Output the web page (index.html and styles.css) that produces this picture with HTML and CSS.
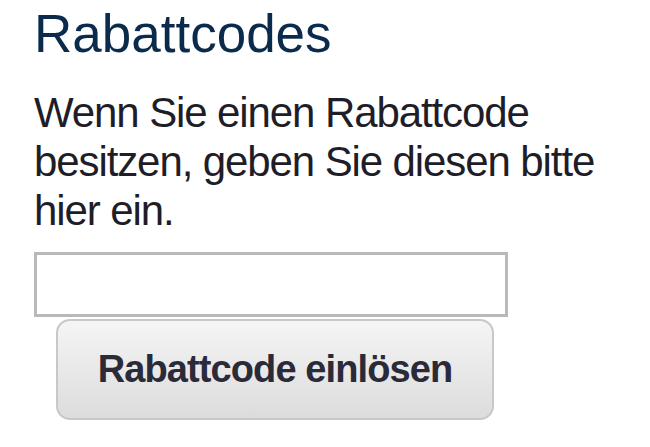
FILE: index.html
```html
<!DOCTYPE html>
<html lang="de">
<head>
    <meta charset="UTF-8">
    <meta name="viewport" content="width=device-width, initial-scale=1.0">
    <title>Rabattcodes</title>
    <link rel="stylesheet" href="styles.css">
</head>
<body>
    <div class="coupon">
        <h1>Rabattcodes</h1>
        <p class="info">Wenn Sie einen Rabattcode besitzen, geben Sie diesen bitte hier ein.</p>
        <form action="" class="coupon-form">
            <input type="text" name="coupon" class="code-input" autocomplete="off">
            <button type="submit" class="redeem">Rabattcode einlösen</button>
        </form>
    </div>
</body>
</html>
```

FILE: styles.css
```css
* {
    margin: 0;
    padding: 0;
    box-sizing: border-box;
}

body {
    background-color: #fff;
    font-family: "Liberation Sans", Arial, sans-serif;
}

.coupon {
    width: 600px;
    padding: 4px 0 0 34px;
    display: flex;
    flex-direction: column;
}

.coupon h1 {
    font-size: 53px;
    line-height: 60px;
    font-weight: normal;
    color: #0b2b4d;
}

.info {
    margin-top: 24px;
    font-size: 42px;
    line-height: 49px;
    letter-spacing: -1.1px;
    color: #1e1d28;
}

.coupon-form {
    margin-top: 17px;
    display: flex;
    flex-direction: column;
    align-items: flex-start;
}

.code-input {
    width: 474px;
    height: 65px;
    border: 3px solid #b9b9b9;
    background: #fff;
}

.redeem {
    width: 438px;
    height: 101px;
    margin: 2px 0 0 22px;
    border: 2px solid #c8c8c8;
    border-radius: 14px;
    background: linear-gradient(#f5f5f5, #dcdcdc);
    font-family: "Liberation Sans", Arial, sans-serif;
    font-size: 38px;
    font-weight: bold;
    letter-spacing: -0.9px;
    color: #2a2a38;
}
```
